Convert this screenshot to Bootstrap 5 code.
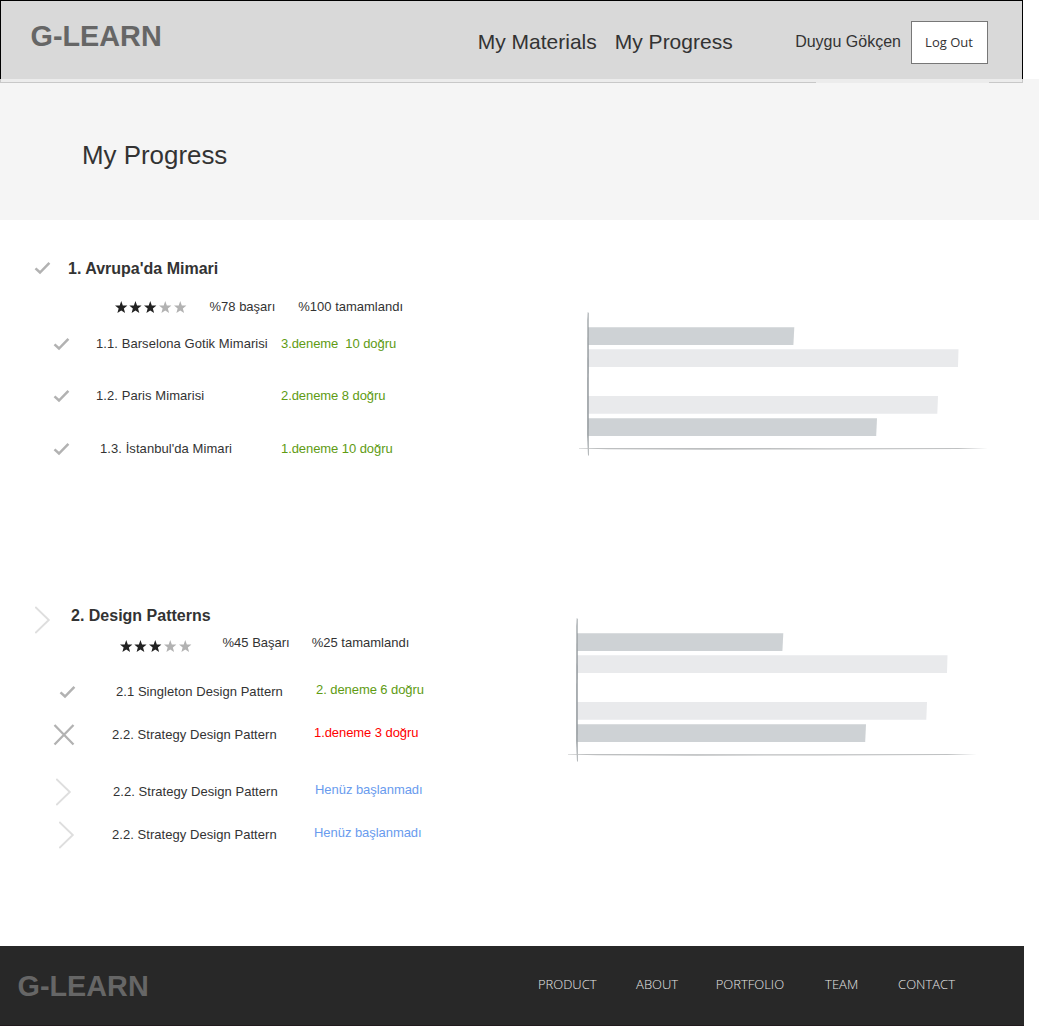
<!DOCTYPE html>
<html lang="tr">
<head>
<meta charset="utf-8">
<meta name="viewport" content="width=device-width, initial-scale=1">
<title>G-LEARN - My Progress</title>
<link href="https://cdn.jsdelivr.net/npm/bootstrap@5.3.0/dist/css/bootstrap.min.css" rel="stylesheet">
<style>
body{font-family:"Liberation Sans",Arial,sans-serif;color:#333;font-size:13px;line-height:20px;overflow:hidden}
a{color:inherit;text-decoration:none}
.wordmark{font-size:28.8px;font-weight:700;line-height:34px;color:#666}
.wordmark-top{margin-top:18px}
.wordmark-foot{margin-top:23px}
.topbar{width:1023px;height:79px;background:#d9d9d9;border:1px solid #000;border-bottom:0;padding-left:29.5px;padding-right:34px}
.topnav{font-size:21px;line-height:26px;gap:18px;margin-top:28px;margin-right:62.5px}
.username{font-size:16px;line-height:20px;margin-top:31px;margin-right:10px}
.logout{width:77px;height:43px;margin-top:20px;border:1px solid #777;border-radius:0;background:#fff;color:#333;font:13px/20px "Open Sans",sans-serif;padding:0 1px 2px 0}
.banner{height:141px;background:#f5f5f5}
.seam{height:4px;width:1023px;background:#ececec;border-left:1px solid #c8c8c8;border-right:1px solid #c8c8c8}
.seam-a{width:815px;border-bottom:1px solid #c8c8c8}
.seam-b{width:33px;border-bottom:1px solid #c8c8c8}
.banner h1{font-size:25.9px;line-height:30px;margin:57px 0 0 82px}
.unit{height:346px;padding-top:38px}
.unit-2{height:380px;padding-top:40px}
.list-col{width:560px}
.list-col>div{align-items:flex-start;white-space:pre}
.list-col svg{flex:none;display:block}
.unit h2{font-size:16px;font-weight:700;line-height:20px;margin:0}
.unit h2.drop{margin-top:1px}
.r27{height:27px}.r37{height:37px}.r39{height:39px}.r43{height:43px}.r49{height:49px}.r52{height:52px}.r53{height:53px}.r57{height:57px}
.mark-cell{width:96px;padding-left:53px;flex:none}
.mark-wide{width:112px}
.indent-2{padding-left:56px}
.indent-3{padding-left:59px}
.head-cell{width:68px;padding-left:34px;flex:none}
.head-cell-2{width:71px;padding-left:35px}
.topic{width:185px;flex:none;letter-spacing:.07px}
.topic-2{width:202px;flex:none;letter-spacing:.05px}
.check-ico{margin-top:3px}
.chev-ico{margin-top:-4px}
.cross-ico{margin-top:-1px}
.stars-1{margin:4px 20px 0 114.5px}
.stars-2{margin:7px 28px 0 119.5px}
.lift{margin-top:-2px}
.ok,.bad{letter-spacing:-.07px}
.ok{color:#609b13}.bad{color:#f00}.todo{color:#699bee;letter-spacing:-.05px}
.chart-1{margin-top:52px;margin-left:18px}
.chart-2{margin-top:10px;margin-left:7px}
.footbar{width:1024px;height:80px;background:#282828;border-bottom:1px solid #211a1d;padding-left:17.5px}
.footnav{font:300 13px/20px "Open Sans",sans-serif;color:#e6e6e6;margin-top:28px;margin-right:69px}
.footnav a:nth-child(1){margin-right:39.5px}
.footnav a:nth-child(2){margin-right:37.5px}
.footnav a:nth-child(3){margin-right:41px}
.footnav a:nth-child(4){margin-right:40px}
</style>
</head>
<body>
<svg class="d-none" xmlns="http://www.w3.org/2000/svg">
  <symbol id="check" viewBox="0 0 17 14"><path d="M1.5 7.3 6 11.5 15.4 1.8" fill="none" stroke="#b2b2b2" stroke-width="2.5"/></symbol>
  <symbol id="chev" viewBox="0 0 16 28"><path d="M.3.9 13.800 14 .3 27.1" fill="none" stroke="#dedede" stroke-width="1.9"/></symbol>
  <symbol id="cross" viewBox="0 0 22 22"><path d="M1.500 1 20.500 20.500M20.500 1 1.500 20.500" fill="none" stroke="#b2b2b2" stroke-width="2.3"/></symbol>
  <symbol id="star" viewBox="0 0 12 12"><path d="M6 0 7.5 4.200 12 4.400 8.500 7.200 9.700 11.600 6 9.200 2.300 11.600 3.500 7.200 0 4.400 4.500 4.200Z" fill="currentColor"/></symbol>
  <symbol id="stars" viewBox="0 0 75 13">
    <g color="#222"><use href="#star" x="0" width="12.500" height="12.500"/><use href="#star" x="14.200" width="12.500" height="12.500"/><use href="#star" x="29" width="12.500" height="12.500"/></g>
    <g color="#b2b2b2"><use href="#star" x="44" width="12.500" height="12.500"/><use href="#star" x="59" width="12.500" height="12.500"/></g>
  </symbol>
  <symbol id="chart" viewBox="0 0 412 148">
    <path d="M10 17.200H216.300L215.400 35H10Z" fill="#ced2d5"/>
    <path d="M10 39.200H380.500L380 57H10Z" fill="#e9eaec"/>
    <path d="M10 86H360L359.300 103.800H10Z" fill="#e9eaec"/>
    <path d="M10 108.200H299L298.200 126H10Z" fill="#ced2d5"/>
    <path d="M9.800 2 10.600 3 10.800 50 10.700 145.500H10L9.200 125V75L9.400 10Z" fill="#959b9f"/>
    <path d="M1 138 30 137.900 250 138.200 410 138 380 139 250 139.500 130 139.700 30 139.300 1 138.500Z" fill="#bdbfc0"/>
  </symbol>
</svg>

<header class="topbar d-flex align-items-start">
  <a class="wordmark wordmark-top me-auto" href="#">G-LEARN</a>
  <nav class="topnav d-flex"><a href="#">My Materials</a><a href="#">My Progress</a></nav>
  <span class="username">Duygu Gökçen</span>
  <button class="logout btn" type="button">Log Out</button>
</header>

<div class="banner">
  <div class="seam d-flex justify-content-between"><div class="seam-a"></div><div class="seam-b"></div></div>
  <h1 class="fw-normal">My Progress</h1>
</div>

<main>
  <section class="unit d-flex">
    <div class="list-col">
      <div class="d-flex r39"><span class="head-cell"><svg class="check-ico" width="17" height="14"><use href="#check"/></svg></span><h2 class="drop">1. Avrupa'da Mimari</h2></div>
      <div class="d-flex r37"><svg class="stars-1" width="75" height="13"><use href="#stars"/></svg><span>%78 başarı</span><span style="margin-left:23px">%100 tamamlandı</span></div>
      <div class="d-flex r52"><span class="mark-cell"><svg class="check-ico" width="17" height="14"><use href="#check"/></svg></span><span class="topic">1.1. Barselona Gotik Mimarisi</span><span class="ok">3.deneme  10 doğru</span></div>
      <div class="d-flex r53"><span class="mark-cell"><svg class="check-ico" width="17" height="14"><use href="#check"/></svg></span><span class="topic">1.2. Paris Mimarisi</span><span class="ok">2.deneme 8 doğru</span></div>
      <div class="d-flex"><span class="mark-cell"><svg class="check-ico" width="17" height="14"><use href="#check"/></svg></span><span class="topic ps-1">1.3. İstanbul'da Mimari</span><span class="ok">1.deneme 10 doğru</span></div>
    </div>
    <svg class="chart-1" width="412" height="148"><use href="#chart"/></svg>
  </section>

  <section class="unit unit-2 d-flex">
    <div class="list-col">
      <div class="d-flex r27"><span class="head-cell head-cell-2"><svg width="16" height="28"><use href="#chev"/></svg></span><h2>2. Design Patterns</h2></div>
      <div class="d-flex r49"><svg class="stars-2" width="75" height="13"><use href="#stars"/></svg><span>%45 Başarı</span><span style="margin-left:22px">%25 tamamlandı</span></div>
      <div class="d-flex r43"><span class="mark-cell mark-wide indent-3"><svg class="check-ico" width="17" height="14"><use href="#check"/></svg></span><span class="topic-2 ps-1">2.1 Singleton Design Pattern</span><span class="ok lift" style="padding-left:2px">2. deneme 6 doğru</span></div>
      <div class="d-flex r57"><span class="mark-cell mark-wide"><svg class="cross-ico" width="22" height="22"><use href="#cross"/></svg></span><span class="topic-2">2.2. Strategy Design Pattern</span><span class="bad lift">1.deneme 3 doğru</span></div>
      <div class="d-flex r43"><span class="mark-cell mark-wide indent-2"><svg class="chev-ico" width="16" height="28"><use href="#chev"/></svg></span><span class="topic-2" style="padding-left:1px">2.2. Strategy Design Pattern</span><span class="todo lift" style="padding-left:1px">Henüz başlanmadı</span></div>
      <div class="d-flex"><span class="mark-cell mark-wide indent-3"><svg class="chev-ico" width="16" height="28"><use href="#chev"/></svg></span><span class="topic-2">2.2. Strategy Design Pattern</span><span class="todo lift">Henüz başlanmadı</span></div>
    </div>
    <svg class="chart-2" width="412" height="148"><use href="#chart"/></svg>
  </section>
</main>

<footer class="footbar d-flex align-items-start justify-content-between">
  <a class="wordmark wordmark-foot" href="#">G-LEARN</a>
  <nav class="footnav d-flex"><a href="#">PRODUCT</a><a href="#">ABOUT</a><a href="#">PORTFOLIO</a><a href="#">TEAM</a><a href="#">CONTACT</a></nav>
</footer>
<script src="https://cdn.jsdelivr.net/npm/bootstrap@5.3.0/dist/js/bootstrap.bundle.min.js"></script>
</body>
</html>
